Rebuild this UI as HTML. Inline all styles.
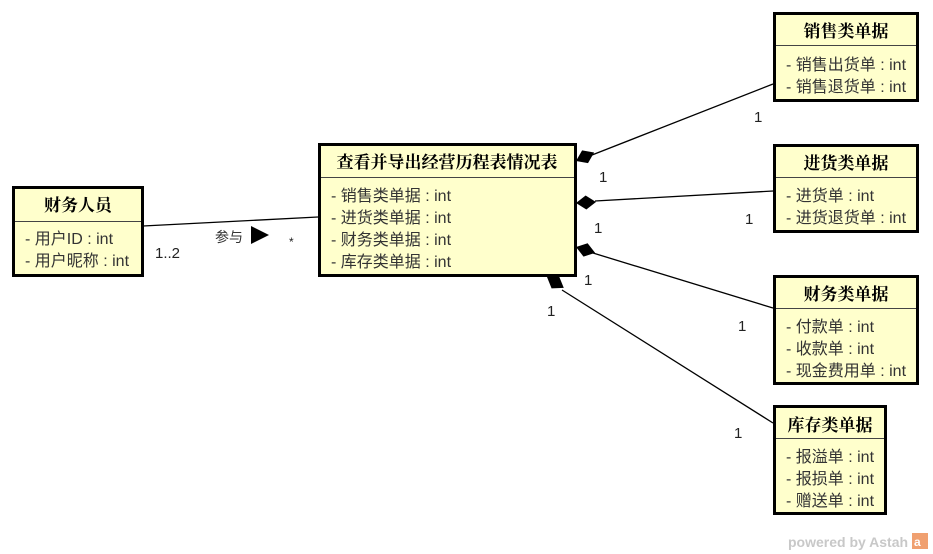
<!DOCTYPE html>
<html><head><meta charset="utf-8"><style>
html,body{margin:0;padding:0;background:#fff;}
svg{display:block;}
.t{font-family:"Liberation Serif","Noto Serif CJK SC",serif;font-weight:bold;font-size:17px;fill:#000;}
.a{font-family:"Liberation Sans","Noto Sans CJK SC",sans-serif;font-size:16px;fill:#333;}
.m{font-family:"Liberation Sans",sans-serif;font-size:15px;fill:#222;}
</style></head><body>
<svg width="933" height="554" viewBox="0 0 933 554" xmlns="http://www.w3.org/2000/svg">
<g stroke="#000" stroke-width="1.3" fill="none">
<line x1="143" y1="226" x2="318" y2="217"/>
<line x1="592" y1="155" x2="773" y2="84"/>
<line x1="595" y1="201" x2="773" y2="191"/>
<line x1="593" y1="253" x2="773" y2="308"/>
<line x1="562" y1="290" x2="773" y2="423"/>
</g>
<g fill="#000">
<polygon points="0,0 10,-7 20,0 10,7" transform="translate(576,161) rotate(-25)"/>
<polygon points="0,0 10,-7 20,0 10,7" transform="translate(576,203) rotate(-3)"/>
<polygon points="0,0 10,-7 20,0 10,7" transform="translate(576,247) rotate(17)"/>
<polygon points="0,0 10,-7 20,0 10,7" transform="translate(547,277) rotate(33)"/>
<polygon points="251,226 269,235 251,244"/>
</g>
<text class="a" x="215" y="242" style="font-size:14px">参与</text>
<text class="m" x="289" y="246" style="font-size:12px">*</text>
<text class="m" x="155" y="258">1..2</text>
<text class="m" x="754" y="122">1</text>
<text class="m" x="599" y="182">1</text>
<text class="m" x="745" y="224">1</text>
<text class="m" x="594" y="233">1</text>
<text class="m" x="584" y="285">1</text>
<text class="m" x="738" y="331">1</text>
<text class="m" x="547" y="316">1</text>
<text class="m" x="734" y="438">1</text>

<rect x="13.5" y="187.5" width="129" height="88" fill="#ffffcc" stroke="#000" stroke-width="3"/>
<line x1="15" y1="221.5" x2="141" y2="221.5" stroke="#444" stroke-width="1"/>
<text class="t" x="78" y="211" text-anchor="middle">财务人员</text>
<text class="a" x="25" y="244">- 用户ID : int</text>
<text class="a" x="25" y="266">- 用户昵称 : int</text>

<rect x="319.5" y="144.5" width="256" height="131" fill="#ffffcc" stroke="#000" stroke-width="3"/>
<line x1="321" y1="177.5" x2="574" y2="177.5" stroke="#444" stroke-width="1"/>
<text class="t" x="447" y="168" text-anchor="middle">查看并导出经营历程表情况表</text>
<text class="a" x="331" y="201">- 销售类单据 : int</text>
<text class="a" x="331" y="223">- 进货类单据 : int</text>
<text class="a" x="331" y="245">- 财务类单据 : int</text>
<text class="a" x="331" y="267">- 库存类单据 : int</text>

<rect x="774.5" y="13.5" width="143" height="87" fill="#ffffcc" stroke="#000" stroke-width="3"/>
<line x1="776" y1="45.5" x2="916" y2="45.5" stroke="#444" stroke-width="1"/>
<text class="t" x="846" y="37" text-anchor="middle">销售类单据</text>
<text class="a" x="786" y="70">- 销售出货单 : int</text>
<text class="a" x="786" y="92">- 销售退货单 : int</text>

<rect x="774.5" y="145.5" width="143" height="86" fill="#ffffcc" stroke="#000" stroke-width="3"/>
<line x1="776" y1="177.5" x2="916" y2="177.5" stroke="#444" stroke-width="1"/>
<text class="t" x="846" y="169" text-anchor="middle">进货类单据</text>
<text class="a" x="786" y="201">- 进货单 : int</text>
<text class="a" x="786" y="223">- 进货退货单 : int</text>

<rect x="774.5" y="276.5" width="143" height="107" fill="#ffffcc" stroke="#000" stroke-width="3"/>
<line x1="776" y1="308.5" x2="916" y2="308.5" stroke="#444" stroke-width="1"/>
<text class="t" x="846" y="300" text-anchor="middle">财务类单据</text>
<text class="a" x="786" y="332">- 付款单 : int</text>
<text class="a" x="786" y="354">- 收款单 : int</text>
<text class="a" x="786" y="376">- 现金费用单 : int</text>

<rect x="774.5" y="406.5" width="111" height="107" fill="#ffffcc" stroke="#000" stroke-width="3"/>
<line x1="776" y1="438.5" x2="884" y2="438.5" stroke="#444" stroke-width="1"/>
<text class="t" x="830" y="431" text-anchor="middle">库存类单据</text>
<text class="a" x="786" y="462">- 报溢单 : int</text>
<text class="a" x="786" y="484">- 报损单 : int</text>
<text class="a" x="786" y="506">- 赠送单 : int</text>

<text x="788" y="547" style="font-family:'Liberation Sans',sans-serif;font-weight:bold;font-size:14px;fill:#c8c8c8">powered by Astah</text>
<rect x="912" y="533" width="16" height="16" fill="#f0a070"/>
<text x="914" y="546" style="font-family:'Liberation Sans',sans-serif;font-weight:bold;font-size:12px;fill:#fff">a</text>
</svg>
</body></html>
